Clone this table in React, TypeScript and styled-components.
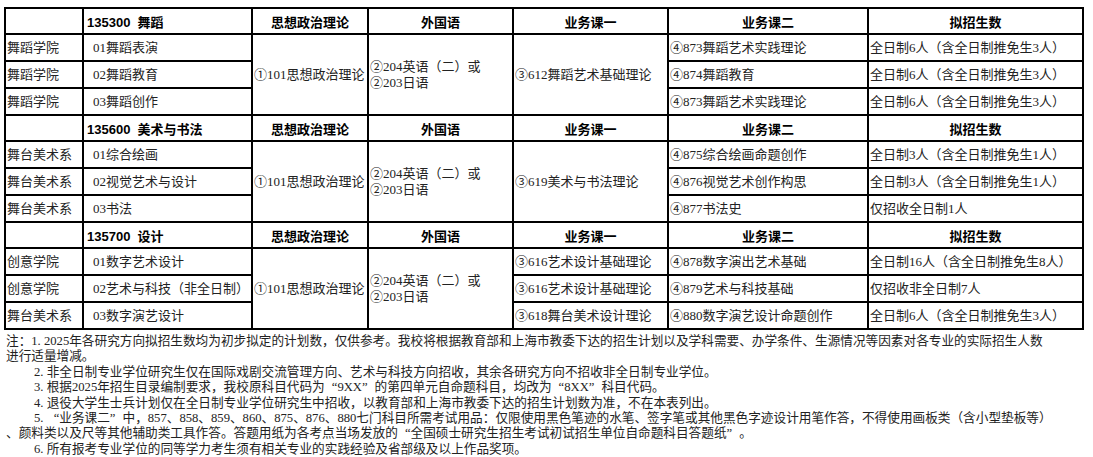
import React from "react";
import styled, { createGlobalStyle } from "styled-components";

const GlobalStyle = createGlobalStyle`
  html, body { margin: 0; padding: 0; background: #ffffff; }
  body { font-family: "Liberation Serif", "Noto Sans CJK SC", serif; color: #222; }
`;

const Page = styled.div`
  padding: 7px 11px 0 4px;
  width: 1078px;
`;

const Table = styled.table`
  border-collapse: collapse;
  table-layout: fixed;
  width: 1078px;
  font-size: 13px;
`;

const HeadRow = styled.tr`
  height: 26px;
`;

const BodyRow = styled.tr`
  height: 27px;
`;

const Th = styled.th<{ $left?: boolean }>`
  border: 2px solid #000;
  padding: 0 3px;
  font-family: "Liberation Sans", "Noto Sans CJK SC", sans-serif;
  font-weight: 700;
  font-size: 13px;
  color: #000;
  text-align: ${(p) => (p.$left ? "left" : "center")};
  vertical-align: middle;
  white-space: pre;
`;

const Td = styled.td<{ $indent?: boolean }>`
  border: 2px solid #000;
  padding: 0 1px 0 ${(p) => (p.$indent ? "9px" : "1px")};
  font-family: "Liberation Serif", "Noto Sans CJK SC", serif;
  font-size: 13px;
  color: #222;
  text-align: left;
  vertical-align: middle;
  white-space: nowrap;
  line-height: 16px;
`;

const Notes = styled.div`
  padding: 4px 0 0 2px;
  font-family: "Liberation Serif", "Noto Sans CJK SC", serif;
  font-size: 12.65px;
  line-height: 15.4px;
  color: #222;
`;

const Note = styled.p<{ $indent?: boolean }>`
  margin: 0;
  text-indent: ${(p) => (p.$indent ? "28px" : "0")};
  white-space: nowrap;
`;

const Quote = styled.span<{ $close?: boolean }>`
  display: inline-block;
  width: 1em;
  text-indent: 0;
  text-align: ${(p) => (p.$close ? "left" : "right")};
`;

const Q = ({ children }: { children: React.ReactNode }) => (
  <>
    <Quote>“</Quote>
    {children}
    <Quote $close>”</Quote>
  </>
);

type Row = { dept: string; dir: string; course1?: string; course2: string; quota: string };
type Section = { code: string; course1?: string; rows: Row[] };

const politics = "①101思想政治理论";
const langLines = ["②204英语（二）或", "②203日语"];

const sections: Section[] = [
  {
    code: "135300  舞蹈",
    course1: "③612舞蹈艺术基础理论",
    rows: [
      { dept: "舞蹈学院", dir: "01舞蹈表演", course2: "④873舞蹈艺术实践理论", quota: "全日制6人（含全日制推免生3人）" },
      { dept: "舞蹈学院", dir: "02舞蹈教育", course2: "④874舞蹈教育", quota: "全日制6人（含全日制推免生3人）" },
      { dept: "舞蹈学院", dir: "03舞蹈创作", course2: "④873舞蹈艺术实践理论", quota: "全日制6人（含全日制推免生3人）" },
    ],
  },
  {
    code: "135600  美术与书法",
    course1: "③619美术与书法理论",
    rows: [
      { dept: "舞台美术系", dir: "01综合绘画", course2: "④875综合绘画命题创作", quota: "全日制3人（含全日制推免生1人）" },
      { dept: "舞台美术系", dir: "02视觉艺术与设计", course2: "④876视觉艺术创作构思", quota: "全日制3人（含全日制推免生1人）" },
      { dept: "舞台美术系", dir: "03书法", course2: "④877书法史", quota: "仅招收全日制1人" },
    ],
  },
  {
    code: "135700  设计",
    rows: [
      { dept: "创意学院", dir: "01数字艺术设计", course1: "③616艺术设计基础理论", course2: "④878数字演出艺术基础", quota: "全日制16人（含全日制推免生8人）" },
      { dept: "创意学院", dir: "02艺术与科技（非全日制）", course1: "③616艺术设计基础理论", course2: "④879艺术与科技基础", quota: "仅招收非全日制7人" },
      { dept: "舞台美术系", dir: "03数字演艺设计", course1: "③618舞台美术设计理论", course2: "④880数字演艺设计命题创作", quota: "全日制6人（含全日制推免生3人）" },
    ],
  },
];

const colWidths = [78, 169, 116, 145, 155, 200, 215];

function SectionRows({ section }: { section: Section }) {
  return (
    <>
      <HeadRow>
        <Th />
        <Th $left>{section.code}</Th>
        <Th>思想政治理论</Th>
        <Th>外国语</Th>
        <Th>业务课一</Th>
        <Th>业务课二</Th>
        <Th>拟招生数</Th>
      </HeadRow>
      {section.rows.map((r, i) => (
        <BodyRow key={i}>
          <Td>{r.dept}</Td>
          <Td $indent>{r.dir}</Td>
          {i === 0 && <Td rowSpan={3}>{politics}</Td>}
          {i === 0 && (
            <Td rowSpan={3}>
              {langLines[0]}
              <br />
              {langLines[1]}
            </Td>
          )}
          {section.course1 ? (i === 0 && <Td rowSpan={3}>{section.course1}</Td>) : <Td>{r.course1}</Td>}
          <Td>{r.course2}</Td>
          <Td>{r.quota}</Td>
        </BodyRow>
      ))}
    </>
  );
}

export default function App() {
  return (
    <Page>
      <GlobalStyle />
      <Table>
        <colgroup>
          {colWidths.map((w, i) => (
            <col key={i} style={{ width: w }} />
          ))}
        </colgroup>
        <tbody>
          {sections.map((s, i) => (
            <SectionRows key={i} section={s} />
          ))}
        </tbody>
      </Table>
      <Notes>
        <Note>
          注：1. 2025年各研究方向拟招生数均为初步拟定的计划数，仅供参考。我校将根据教育部和上海市教委下达的招生计划以及学科需要、办学条件、生源情况等因素对各专业的实际招生人数
        </Note>
        <Note>进行适量增减。</Note>
        <Note $indent>2. 非全日制专业学位研究生仅在国际戏剧交流管理方向、艺术与科技方向招收，其余各研究方向不招收非全日制专业学位。</Note>
        <Note $indent>
          3. 根据2025年招生目录编制要求，我校原科目代码为<Q>9XX</Q>的第四单元自命题科目，均改为<Q>8XX</Q>科目代码。
        </Note>
        <Note $indent>4. 退役大学生士兵计划仅在全日制专业学位研究生中招收，以教育部和上海市教委下达的招生计划数为准，不在本表列出。</Note>
        <Note $indent>
          5. <Q>业务课二</Q>中，857、858、859、860、875、876、880七门科目所需考试用品：仅限使用黑色笔迹的水笔、签字笔或其他黑色字迹设计用笔作答，不得使用画板类（含小型垫板等）
        </Note>
        <Note>
          、颜料类以及尺等其他辅助类工具作答。答题用纸为各考点当场发放的<Q>全国硕士研究生招生考试初试招生单位自命题科目答题纸</Q>。
        </Note>
        <Note $indent>6. 所有报考专业学位的同等学力考生须有相关专业的实践经验及省部级及以上作品奖项。</Note>
      </Notes>
    </Page>
  );
}
